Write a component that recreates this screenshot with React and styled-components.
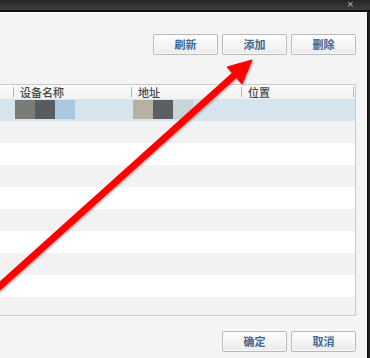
import React from "react";
import styled, { createGlobalStyle } from "styled-components";

const Global = createGlobalStyle`
  html, body { margin: 0; padding: 0; background: #2a2a2a; }
  body { font-family: "Noto Sans CJK SC", "Noto Sans", sans-serif; }
`;

const Window = styled.div`
  position: relative;
  width: 370px;
  height: 358px;
  display: flex;
  flex-direction: column;
  overflow: hidden;
  background: #f4f4f4;
`;

const TitleBar = styled.div`
  position: relative;
  height: 10px;
  flex: none;
  background: linear-gradient(#262626, #3d3d3d);
  border-bottom: 2px solid #0e0e0e;
`;

const Close = styled.span`
  position: absolute;
  right: 16px;
  top: 0;
  font-family: "DejaVu Sans", sans-serif;
  font-size: 9px;
  color: #bdbdbd;
  line-height: 9px;
`;

const Body = styled.div`
  flex: 1;
  display: flex;
  min-height: 0;
`;

const Content = styled.div`
  flex: 1;
  display: flex;
  flex-direction: column;
  background: #f4f4f4;
  border-top: 1px solid #fbfbfb;
  min-width: 0;
`;

const EdgeBar = styled.div`
  width: 3px;
  flex: none;
  background: linear-gradient(90deg, #0c0c0c, #2e2e2e);
`;

const Toolbar = styled.div`
  display: flex;
  justify-content: flex-end;
  gap: 4px;
  padding: ${(p) => p.$top}px 11px 0 0;
`;

const Button = styled.button`
  width: 65px;
  height: 21px;
  box-sizing: border-box;
  border: 1px solid #b9b9b9;
  border-radius: 2px;
  background: linear-gradient(#ffffff, #eaeaea);
  box-shadow: inset 0 0 0 1px #fafafa;
  font-family: "Noto Sans CJK SC", sans-serif;
  font-weight: 700;
  font-size: 11px;
  color: #3d6891;
  padding: 0;
  line-height: 19px;
`;

const Table = styled.div`
  margin: 29px 11px 0 -1px;
  height: 230px;
  border: 1px solid #c9c9c9;
  background: #ffffff;
  overflow: hidden;
  display: flex;
  flex-direction: column;
`;

const cols = "13px 118px 110px 112px 1fr";

const HeaderRow = styled.div`
  display: grid;
  grid-template-columns: ${cols};
  height: 14px;
  flex: none;
  background: linear-gradient(#fbfbfb, #f1f1f1);
`;

const HeadCell = styled.div`
  position: relative;
  font-size: 11px;
  font-weight: 500;
  line-height: 14px;
  color: #444444;
  padding-left: 7px;
  white-space: nowrap;
  &::before {
    content: "";
    position: absolute;
    left: 0;
    top: 2px;
    height: 10px;
    border-left: 1px solid #b5b5b5;
    display: ${(p) => (p.$first ? "none" : "block")};
  }
`;

const Row = styled.div`
  display: grid;
  grid-template-columns: ${cols};
  height: 22px;
  flex: none;
  background: ${(p) => (p.$selected ? "#d6e4ee" : p.$odd ? "#f2f2f2" : "#ffffff")};
`;

const Cell = styled.div`
  display: flex;
  align-items: flex-start;
  padding: 1px 0 0 2px;
`;

const Pixel = styled.span`
  width: 20px;
  height: 19px;
  background: ${(p) => p.$c};
`;

const Footer = styled.div`
  flex: 1;
  border-top: 1px solid #fafafa;
`;

const Overlay = styled.svg`
  position: absolute;
  left: 0;
  top: 0;
  pointer-events: none;
`;

const rows = Array.from({ length: 10 }, (_, i) => i);

export default function App() {
  return (
    <>
      <Global />
      <Window>
        <TitleBar>
          <Close>×</Close>
        </TitleBar>
        <Body>
          <Content>
            <Toolbar $top={21}>
              <Button>刷新</Button>
              <Button>添加</Button>
              <Button>删除</Button>
            </Toolbar>
            <Table>
              <HeaderRow>
                <HeadCell $first />
                <HeadCell>设备名称</HeadCell>
                <HeadCell>地址</HeadCell>
                <HeadCell>位置</HeadCell>
                <HeadCell />
              </HeaderRow>
              {rows.map((i) =>
                i === 0 ? (
                  <Row key={i} $selected>
                    <Cell />
                    <Cell>
                      <Pixel $c="#7b7c76" />
                      <Pixel $c="#575c5f" />
                      <Pixel $c="#aac7e0" />
                    </Cell>
                    <Cell>
                      <Pixel $c="#b7b1a0" />
                      <Pixel $c="#5b5f64" />
                      <Pixel $c="#c9d4d9" />
                    </Cell>
                    <Cell />
                    <Cell />
                  </Row>
                ) : (
                  <Row key={i} $odd={i % 2 === 1}>
                    <Cell />
                    <Cell />
                    <Cell />
                    <Cell />
                    <Cell />
                  </Row>
                )
              )}
            </Table>
            <Footer>
              <Toolbar $top={14}>
                <Button>确定</Button>
                <Button>取消</Button>
              </Toolbar>
            </Footer>
          </Content>
          <EdgeBar />
        </Body>
        <Overlay width="370" height="358" viewBox="0 0 370 358">
          <defs>
            <filter id="sh" x="-10%" y="-10%" width="120%" height="120%">
              <feDropShadow dx="1" dy="1" stdDeviation="0.8" floodColor="#000" floodOpacity="0.35" />
            </filter>
          </defs>
          <g filter="url(#sh)" fill="#ff0000" stroke="#ff0000">
            <line x1="-10" y1="295" x2="238" y2="72" strokeWidth="7" />
            <polygon points="252,60 227,67 242,84" strokeWidth="1" strokeLinejoin="round" />
          </g>
        </Overlay>
      </Window>
    </>
  );
}
